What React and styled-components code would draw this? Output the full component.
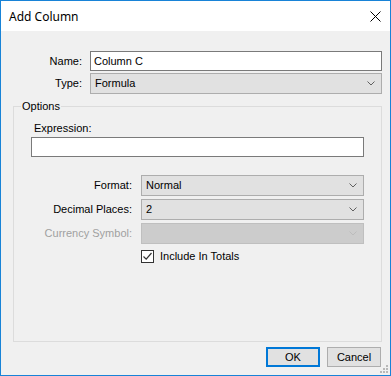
import React from "react";
import styled, { createGlobalStyle } from "styled-components";

const Global = createGlobalStyle`
  html, body { margin: 0; padding: 0; background: #ffffff; }
  * { box-sizing: border-box; }
`;

const Window = styled.div`
  width: 391px;
  height: 376px;
  border: 1px solid #1883d7;
  display: flex;
  flex-direction: column;
  font-family: "Liberation Sans", Arial, sans-serif;
  font-size: 11px;
  color: #000;
`;

const TitleBar = styled.div`
  height: 30px;
  flex: none;
  background: #ffffff;
  display: flex;
  align-items: center;
  justify-content: space-between;
  padding: 0 9px 0 8px;
`;

const Title = styled.span`
  font-family: "Noto Sans", "Open Sans", sans-serif;
  font-size: 12px;
  line-height: 16px;
  margin-top: 1px;
`;

const CloseButton = styled.div`
  width: 12px;
  height: 12px;
  display: flex;
  align-items: center;
  justify-content: center;
`;

const Body = styled.div`
  flex: 1;
  background: #f0f0f0;
  display: flex;
  flex-direction: column;
  padding: 20px 8px 8px 11px;
  position: relative;
`;

const TopGrid = styled.div`
  display: grid;
  grid-template-columns: 70px 1fr;
  column-gap: 8px;
  row-gap: 2px;
  align-items: center;
`;

const Label = styled.label`
  text-align: right;
  white-space: nowrap;
  line-height: 13px;
  color: ${(p) => (p.$disabled ? "#a0a0a0" : "#000")};
`;

const TextBox = styled.div`
  height: ${(p) => p.$h || 20}px;
  background: #ffffff;
  border: 1px solid #7a7a7a;
  padding: 0 3px;
  display: flex;
  align-items: center;
  line-height: 13px;
`;

const ComboBox = styled.div`
  height: 21px;
  background: ${(p) => (p.$disabled ? "#cccccc" : "#e1e1e1")};
  border: 1px solid ${(p) => (p.$disabled ? "#bfbfbf" : "#adadad")};
  padding: 0 6px 0 4px;
  display: flex;
  align-items: center;
  justify-content: space-between;
  line-height: 13px;
`;

const Group = styled.fieldset`
  flex: 1;
  margin: 6px 0 0 1px;
  border: 1px solid #dcdcdc;
  padding: 0 17px 0 17px;
  min-width: 0;
  display: flex;
  flex-direction: column;
`;

const Legend = styled.legend`
  margin-left: -10px;
  padding: 0 1px;
  line-height: 13px;
`;

const ExprLabel = styled.label`
  margin: 9px 0 2px 3px;
  line-height: 13px;
`;

const FieldGrid = styled.div`
  display: grid;
  grid-template-columns: 101px 1fr;
  column-gap: 9px;
  row-gap: 3px;
  align-items: center;
  margin-top: 18px;
`;

const CheckRow = styled.div`
  grid-column: 2;
  display: flex;
  align-items: center;
  gap: 6px;
  margin-top: 3px;
  line-height: 13px;
`;

const CheckBox = styled.div`
  width: 13px;
  height: 13px;
  border: 1px solid #333333;
  background: #ffffff;
  display: flex;
  align-items: center;
  justify-content: center;
`;

const ButtonRow = styled.div`
  display: flex;
  justify-content: flex-end;
  gap: 7px;
  margin-top: 5px;
  padding-right: 1px;
`;

const Button = styled.div`
  width: 54px;
  height: 20px;
  background: #e1e1e1;
  border: ${(p) => (p.$default ? "2px solid #0078d7" : "1px solid #adadad")};
  display: flex;
  align-items: center;
  justify-content: center;
  line-height: 13px;
`;

const Grip = styled.div`
  position: absolute;
  right: 1px;
  bottom: 2px;
  width: 9px;
  height: 9px;
`;

const Chevron = ({ disabled }) => (
  <svg width="8" height="5" viewBox="0 0 8 5">
    <path d="M0.5 0.5 L4 4 L7.5 0.5" fill="none" stroke={disabled ? "#bcbcbc" : "#606060"} strokeWidth="1" />
  </svg>
);

const Combo = ({ value, disabled }) => (
  <ComboBox $disabled={disabled}>
    <span>{value}</span>
    <Chevron disabled={disabled} />
  </ComboBox>
);

export default function App() {
  return (
    <>
      <Global />
      <Window>
        <TitleBar>
          <Title>Add Column</Title>
          <CloseButton>
            <svg width="11" height="11" viewBox="0 0 11 11">
              <path d="M0.5 0.5 L10.5 10.5 M10.5 0.5 L0.5 10.5" stroke="#000" strokeWidth="1" />
            </svg>
          </CloseButton>
        </TitleBar>
        <Body>
          <TopGrid>
            <Label>Name:</Label>
            <TextBox>Column C</TextBox>
            <Label>Type:</Label>
            <Combo value="Formula" />
          </TopGrid>
          <Group>
            <Legend>Options</Legend>
            <ExprLabel>Expression:</ExprLabel>
            <TextBox $h={20} />
            <FieldGrid>
              <Label>Format:</Label>
              <Combo value="Normal" />
              <Label>Decimal Places:</Label>
              <Combo value="2" />
              <Label $disabled>Currency Symbol:</Label>
              <Combo value="" disabled />
              <CheckRow>
                <CheckBox>
                  <svg width="11" height="11" viewBox="0 0 11 11">
                    <path d="M1.5 5.5 L4.2 8.2 L9.5 2" fill="none" stroke="#333" strokeWidth="1.2" />
                  </svg>
                </CheckBox>
                <span>Include In Totals</span>
              </CheckRow>
            </FieldGrid>
          </Group>
          <ButtonRow>
            <Button $default>OK</Button>
            <Button>Cancel</Button>
          </ButtonRow>
          <Grip>
            <svg width="9" height="9" viewBox="0 0 9 9">
              {[
                [6, 0],
                [3, 3], [6, 3],
                [0, 6], [3, 6], [6, 6],
              ].map(([x, y], i) => (
                <rect key={i} x={x} y={y} width="2" height="2" fill="#b8b8b8" />
              ))}
            </svg>
          </Grip>
        </Body>
      </Window>
    </>
  );
}
